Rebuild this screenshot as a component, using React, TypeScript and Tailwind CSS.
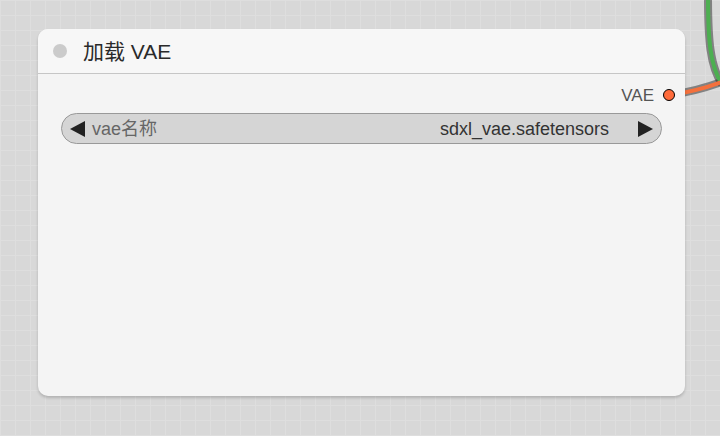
import React from 'react'

const font = "font-['Liberation_Sans','Noto_Sans_CJK_SC',sans-serif]"

function Wires() {
  return (
    <svg className="absolute inset-0 pointer-events-none" width={720} height={436}>
      <path d="M708 -5 C 708 40, 710 66, 722 84" fill="none" stroke="rgba(0,0,0,0.4)" strokeWidth={8} />
      <path d="M670 95 C 690 92, 706 88, 724 81" fill="none" stroke="rgba(0,0,0,0.4)" strokeWidth={8} />
      <path d="M708 -5 C 708 40, 710 66, 722 84" fill="none" stroke="#4caf50" strokeWidth={4} />
      <path d="M670 95 C 690 92, 706 88, 724 81" fill="none" stroke="#f4703c" strokeWidth={4} />
    </svg>
  )
}

function Arrow({ dir }: { dir: 'left' | 'right' }) {
  return (
    <svg width={15} height={16} viewBox="0 0 15 16" className="shrink-0">
      {dir === 'left' ? <polygon points="15,0 15,16 0,8" fill="#222" /> : <polygon points="0,0 0,16 15,8" fill="#222" />}
    </svg>
  )
}

export default function App() {
  return (
    <div
      className={`relative w-[720px] h-[436px] overflow-hidden bg-[#d8d8d8] bg-[linear-gradient(to_right,#dedede_1px,transparent_1px),linear-gradient(to_bottom,#dedede_1px,transparent_1px)] bg-[size:15px_15px] pl-[38px] pt-[29px] ${font}`}
    >
      <Wires />
      <div className="relative w-[647px] h-[367px] rounded-[10px] bg-[#f4f4f4] shadow-[0_2px_3px_rgba(0,0,0,0.18)] flex flex-col">
        <div className="h-[45px] flex items-center rounded-t-[10px] bg-[#f7f7f7] border-b border-[#c6c6c6] pl-[15px]">
          <span className="w-[14px] h-[14px] rounded-full bg-[#cbcbcb]" />
          <span className="ml-[16px] text-[21px] text-[#2a2a2a] leading-none">加载 VAE</span>
        </div>
        <div className="flex items-center justify-end h-[20px] mt-[11px] pr-[10px]">
          <span className="text-[17px] text-[#555] leading-none">VAE</span>
          <span className="ml-[9px] w-[12px] h-[12px] rounded-full bg-[#ff6b3b] border border-black" />
        </div>
        <div className="mx-[23px] mt-[8px] h-[31px] rounded-full bg-[#d5d5d5] border border-[#999] flex items-center px-[8px] text-[18px] leading-none">
          <Arrow dir="left" />
          <span className="ml-[7px] text-[#666]">vae名称</span>
          <span className="ml-auto text-[#333]">sdxl_vae.safetensors</span>
          <span className="ml-[29px]"><Arrow dir="right" /></span>
        </div>
      </div>
    </div>
  )
}
